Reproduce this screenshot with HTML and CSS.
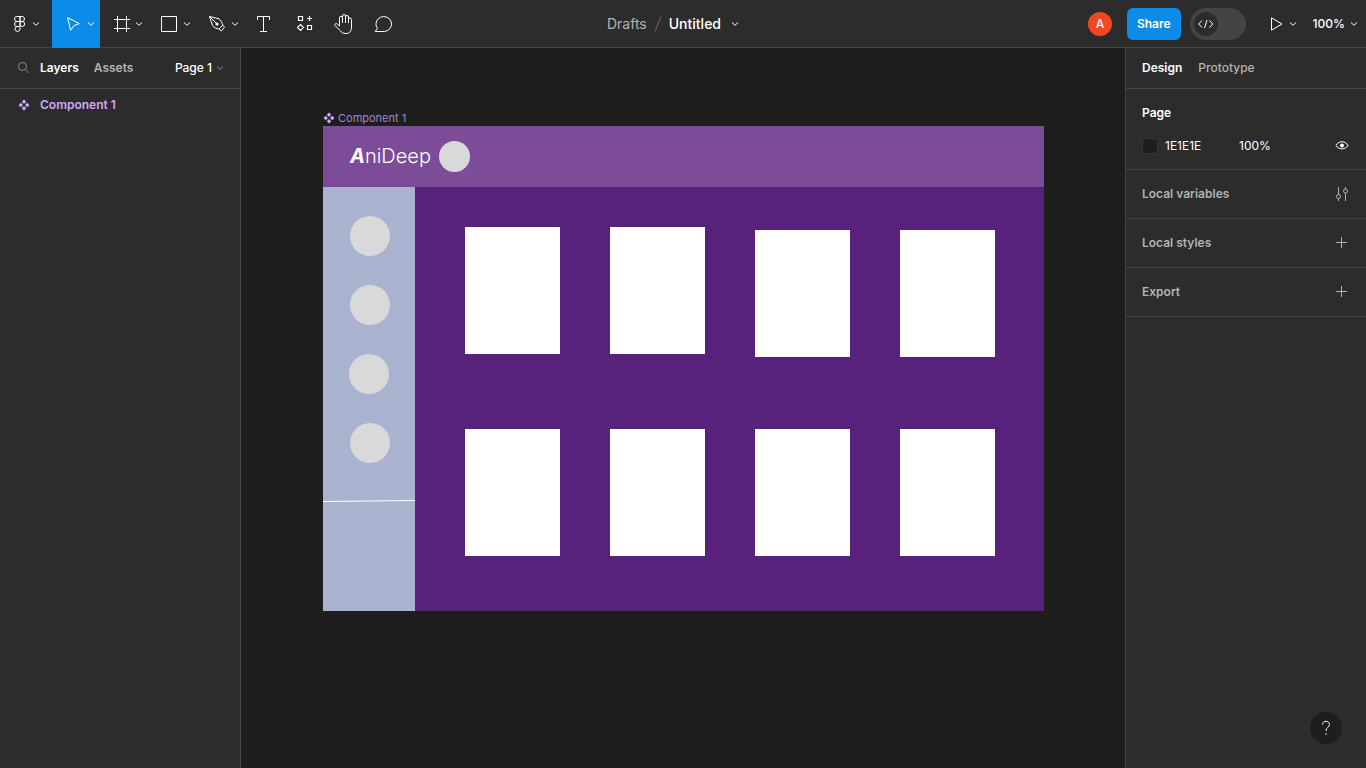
FILE: index.html
```html
<!DOCTYPE html>
<html lang="en">
<head>
<meta charset="utf-8">
<title>Untitled – Figma</title>
<link rel="stylesheet" href="styles.css">
</head>
<body>
<svg class="defs" aria-hidden="true">
  <symbol id="chevron" viewBox="0 0 8 8"><path d="M1 2.5 L4 5.3 L7 2.5" fill="none" stroke="currentColor"/></symbol>
  <symbol id="component" viewBox="0 0 12 12"><path d="M6 .5 8.2 2.8 6 5 3.8 2.8Z M6 7 8.2 9.2 6 11.5 3.8 9.2Z M2.8 3.8 5 6 2.8 8.2 .5 6Z M9.2 3.8 11.5 6 9.2 8.2 7 6Z" fill="currentColor"/></symbol>
  <symbol id="plus" viewBox="0 0 16 16"><path d="M2 7.5H13 M7.5 2V13" fill="none" stroke="currentColor"/></symbol>
</svg>
<div class="app">
  <header class="toolbar">
    <nav class="tools" aria-label="Tools">
      <button class="tool tool-menu" aria-label="Main menu">
        <svg class="icon" viewBox="0 0 24 24"><g fill="none" stroke="currentColor"><path d="M12 4.500H9A2.500 2.500 0 0 0 9 9.500H12Z M12 9.500H9A2.500 2.500 0 0 0 9 14.500H12Z M12 14.500H9A2.500 2.500 0 1 0 12 17Z M12 4.500H14A2.500 2.500 0 0 1 14 9.500H12Z"/><circle cx="14.300" cy="12" r="2.400"/></g></svg>
        <svg class="chevron"><use href="#chevron"/></svg>
      </button>
      <button class="tool tool-active" aria-label="Move">
        <svg class="icon" viewBox="0 0 24 24"><path d="M5.600 5.600 17.300 11.600 12 13.600 8.600 18.300Z" fill="none" stroke="currentColor" stroke-linejoin="round"/></svg>
        <svg class="chevron"><use href="#chevron"/></svg>
      </button>
      <button class="tool" aria-label="Frame">
        <svg class="icon" viewBox="0 0 24 24"><path d="M4 7.500H20 M4 16.500H20 M7.500 4V20 M16.500 4V20" fill="none" stroke="currentColor"/></svg>
        <svg class="chevron"><use href="#chevron"/></svg>
      </button>
      <button class="tool" aria-label="Rectangle">
        <svg class="icon" viewBox="0 0 24 24"><path d="M3.500 4.500H18.500V19.500H3.500Z" fill="none" stroke="currentColor"/></svg>
        <svg class="chevron"><use href="#chevron"/></svg>
      </button>
      <button class="tool" aria-label="Pen">
        <svg class="icon" viewBox="0 0 24 24"><g fill="none" stroke="currentColor" stroke-linejoin="round"><path d="M3.500 4.500 13 6.800C14.800 8 16 10.500 16.800 13.200L13 17C10 16.500 8 15.500 6.500 13.500Z M3.500 4.500 10.300 11.300"/><path d="M16.800 13.200 18.500 15.200 15.300 19 13 17"/></g><circle cx="11" cy="12" r="1.600" fill="currentColor"/></svg>
        <svg class="chevron"><use href="#chevron"/></svg>
      </button>
      <button class="tool tool-single" aria-label="Text">
        <svg class="icon" viewBox="0 0 24 24"><path d="M5.500 8V4.500H17.500V8 M11.500 4.500V19.500 M8 19.500H15" fill="none" stroke="currentColor"/></svg>
      </button>
      <button class="tool tool-single" aria-label="Resources">
        <svg class="icon" viewBox="0 0 24 24"><path d="M6.500 4.500H10.500V8.500H6.500Z M15.500 13.500H19.500V17.500H15.500Z M17.500 4V9 M15 6.500H20 M8.500 12.500 11.500 15.500 8.500 18.500 5.500 15.500Z" fill="none" stroke="currentColor" stroke-width="1.200"/></svg>
      </button>
      <button class="tool tool-single" aria-label="Hand">
        <svg class="icon" viewBox="0 0 24 24"><path d="M7.500 14V5.800A1.500 1.500 0 0 1 10.500 5.800V11 M10.500 6V4A1.500 1.500 0 0 1 13.500 4V11 M13.500 5A1.500 1.500 0 0 1 16.500 5V11 M16.500 7.500A1.500 1.500 0 0 1 19.500 7.500V15C19.500 19 17.500 21.500 14 21.500C11 21.500 9.500 20.500 8 18.500L3 13.500C2.200 12 4 10.800 5.400 12L7.500 14.200" fill="none" stroke="currentColor" stroke-linejoin="round"/></svg>
      </button>
      <button class="tool tool-single" aria-label="Comment">
        <svg class="icon" viewBox="0 0 24 24"><path d="M3.200 19.500 5.400 16.400A7.800 7.500 0 1 1 12.500 19.500Z" fill="none" stroke="currentColor" stroke-linejoin="round"/></svg>
      </button>
    </nav>
    <div class="title">
      <a class="folder" href="#">Drafts</a>
      <svg class="slash" viewBox="0 0 8 18"><path d="M1 16.500 7 1.500" stroke="currentColor" fill="none"/></svg>
      <button class="filename">Untitled <svg class="chevron"><use href="#chevron"/></svg></button>
    </div>
    <div class="actions">
      <button class="avatar" aria-label="Account">A</button>
      <button class="share">Share</button>
      <label class="devmode">
        <input class="devmode-input" type="checkbox" aria-label="Dev Mode">
        <svg class="devmode-knob" viewBox="0 0 24 24"><circle cx="12" cy="12" r="12" fill="#2c2c2c"/><path d="M8 8.500 4.700 12 8 15.500 M15.500 8.500 18.800 12 15.500 15.500 M13 8 10.500 16" fill="none" stroke="currentColor"/></svg>
      </label>
      <button class="present" aria-label="Present">
        <svg class="icon" viewBox="0 0 24 24"><path d="M7.500 5.800V18.200L18 12Z" fill="none" stroke="currentColor"/></svg>
        <svg class="chevron"><use href="#chevron"/></svg>
      </button>
      <button class="zoom">100% <svg class="chevron"><use href="#chevron"/></svg></button>
    </div>
  </header>
  <aside class="panel panel-left">
    <div class="tabs tabs-left">
      <button class="search" aria-label="Search"><svg viewBox="0 0 12 12"><g fill="none" stroke="currentColor"><circle cx="4.500" cy="4.500" r="4"/><path d="M7.500 7.500 11 11"/></g></svg></button>
      <button class="tab tab-active">Layers</button>
      <button class="tab">Assets</button>
      <button class="page-picker">Page 1 <svg class="chevron"><use href="#chevron"/></svg></button>
    </div>
    <ul class="layers">
      <li><button class="layer"><svg class="component-icon"><use href="#component"/></svg>Component 1</button></li>
    </ul>
  </aside>
  <main class="canvas">
    <div class="frame-label"><svg class="component-icon"><use href="#component"/></svg>Component 1</div>
    <div class="frame">
      <div class="shape banner"></div>
      <div class="shape rail"></div>
      <div class="shape logo"><b class="logo-a">A</b>niDeep</div>
      <div class="shape dot dot-banner"></div>
      <div class="shape dot dot-1"></div>
      <div class="shape dot dot-2"></div>
      <div class="shape dot dot-3"></div>
      <div class="shape dot dot-4"></div>
      <svg class="shape rule" viewBox="0 0 92 3"><path d="M0 2.500 92 1.500" stroke="#fff" fill="none"/></svg>
      <div class="shape card col-1 row-1"></div>
      <div class="shape card col-2 row-1"></div>
      <div class="shape card col-3 row-1-low"></div>
      <div class="shape card col-4 row-1-low"></div>
      <div class="shape card col-1 row-2"></div>
      <div class="shape card col-2 row-2"></div>
      <div class="shape card col-3 row-2"></div>
      <div class="shape card col-4 row-2"></div>
    </div>
  </main>
  <aside class="panel panel-right">
    <div class="tabs tabs-right">
      <button class="tab tab-active">Design</button>
      <button class="tab">Prototype</button>
    </div>
    <section class="section-page">
      <h2 class="heading heading-page">Page</h2>
      <div class="fill">
        <button class="swatch" aria-label="Page colour"></button>
        <input class="field field-hex" type="text" value="1E1E1E" aria-label="Colour">
        <input class="field field-opacity" type="text" value="100%" aria-label="Opacity">
        <button class="icon-button icon-bright" aria-label="Toggle visibility"><svg viewBox="0 0 16 16"><path d="M2 7.500C4.500 2.500 11.500 2.500 14 7.500C11.500 12 4.500 12 2 7.500Z" fill="none" stroke="currentColor"/><circle cx="8" cy="7.500" r="2" fill="currentColor"/></svg></button>
      </div>
    </section>
    <section class="section">
      <h2 class="heading">Local variables</h2>
      <button class="icon-button" aria-label="Open variables"><svg viewBox="0 0 16 16"><g fill="none" stroke="currentColor"><path d="M4.500 1V8.500 M4.500 12.500V15 M11.500 1V3 M11.500 7V15"/><circle cx="4.500" cy="10.500" r="2"/><circle cx="11.500" cy="5" r="2"/></g></svg></button>
    </section>
    <section class="section">
      <h2 class="heading">Local styles</h2>
      <button class="icon-button" aria-label="Add style"><svg><use href="#plus"/></svg></button>
    </section>
    <section class="section">
      <h2 class="heading">Export</h2>
      <button class="icon-button" aria-label="Add export"><svg><use href="#plus"/></svg></button>
    </section>
    <button class="help" aria-label="Help"><svg viewBox="0 0 16 16"><path d="M4.500 4.500C4.500 .3 11.500 .3 11.500 4.500C11.500 7.300 8 7 8 11" fill="none" stroke="currentColor"/><circle cx="8" cy="14" r=".8" fill="currentColor"/></svg></button>
  </aside>
</div>
</body>
</html>
```
FILE: styles.css
```css
* { box-sizing: border-box; }

body {
  margin: 0;
  background: #1e1e1e;
  color: #fff;
  font: 12px/16px Inter, "Liberation Sans", sans-serif;
}

button, input {
  margin: 0;
  padding: 0;
  border: 0;
  background: none;
  color: inherit;
  font: inherit;
}

svg { display: block; flex: none; }
.defs { position: absolute; width: 0; height: 0; }
.icon { width: 24px; height: 24px; }
.chevron { width: 8px; height: 8px; }

.app {
  display: grid;
  grid-template: 48px 1fr / 241px 1fr 241px;
  height: 100vh;
}

/* Toolbar */
.toolbar {
  grid-column: 1 / -1;
  display: grid;
  grid-template-columns: 1fr auto 1fr;
  background: #2c2c2c;
  box-shadow: inset 0 -1px #444;
}

.tools { display: flex; }

.tool {
  display: flex;
  align-items: center;
  gap: 1px;
  width: 48px;
  padding-left: 10px;
}
.tool-menu { width: 52px; padding-left: 8px; gap: 0; }
.tool-active { background: #0c8ce9; }
.tool-single { width: 40px; padding-left: 8px; }

.title {
  display: flex;
  align-items: center;
  gap: 7px;
  padding-right: 20px;
  font-size: 14px;
}
.folder { color: #b3b3b3; text-decoration: none; }
.slash { width: 8px; height: 18px; color: #6b6b6b; }
.filename { display: flex; align-items: center; gap: 10px; font-weight: 500; }

.actions {
  display: flex;
  align-items: center;
  justify-content: flex-end;
  padding-right: 8px;
}
.avatar {
  width: 24px;
  height: 24px;
  margin-right: 15px;
  border-radius: 50%;
  background: #f24822;
  font-weight: 500;
}
.share {
  height: 32px;
  margin-right: 9px;
  padding: 0 10px;
  border-radius: 6px;
  background: #0c8ce9;
  font-weight: 600;
}
.devmode {
  display: grid;
  align-items: center;
  margin-right: 18px;
}
.devmode-input {
  grid-area: 1 / 1;
  appearance: none;
  width: 56px;
  height: 32px;
  border-radius: 16px;
  background: #444;
}
.devmode-knob { grid-area: 1 / 1; width: 24px; height: 24px; margin-left: 4px; }
.present { display: flex; align-items: center; margin-right: 16px; }
.present .icon { margin-right: 1px; }
.zoom { display: flex; align-items: center; gap: 5px; font-weight: 500; }

/* Side panels */
.panel { background: #2c2c2c; }
.panel-left { border-right: 1px solid #444; }
.panel-right {
  display: flex;
  flex-direction: column;
  border-left: 1px solid #444;
}

.tabs {
  display: flex;
  align-items: center;
  gap: 16px;
  height: 41px;
  border-bottom: 1px solid #444;
}
.tabs-left { gap: 15px; padding: 0 16px 0 18px; }
.tabs-right { padding: 0 16px; }
.tab { color: #b3b3b3; font-weight: 500; }
.tabs-left .tab { font-weight: 600; }
.tabs .tab-active { color: #fff; font-weight: 600; }
.search { margin-right: -5px; color: #8c8c8c; }
.search svg { width: 12px; height: 12px; }
.page-picker {
  display: flex;
  align-items: center;
  gap: 4px;
  margin-left: auto;
  font-weight: 500;
}
.page-picker .chevron { color: #8c8c8c; }

.layers { margin: 0; padding: 0; list-style: none; }
.layer {
  display: flex;
  align-items: center;
  gap: 10px;
  width: 100%;
  height: 32px;
  padding-left: 18px;
  color: #d1a8ff;
  font-weight: 600;
}
.component-icon { width: 12px; height: 12px; }

.heading { margin: 0; color: #b3b3b3; font: inherit; font-weight: 600; }
.heading-page { color: #fff; }
.section-page { padding: 16px 16px 15px; border-bottom: 1px solid #444; }
.section {
  display: flex;
  align-items: center;
  justify-content: space-between;
  height: 49px;
  padding: 0 16px;
  border-bottom: 1px solid #444;
}
.icon-button { color: #b3b3b3; }
.icon-button svg { width: 16px; height: 16px; }
.icon-bright { margin-left: auto; color: #fff; }
.fill { display: flex; align-items: center; margin-top: 17px; }
.swatch {
  width: 16px;
  height: 16px;
  margin-right: 7px;
  border: 1px solid #333;
  background: #1e1e1e;
}
.field { height: 16px; }
.field-hex { width: 74px; }
.field-opacity { width: 48px; }

.help {
  display: grid;
  place-items: center;
  width: 32px;
  height: 32px;
  margin: auto 24px 24px auto;
  border-radius: 50%;
  background: #1e1e1e;
}
.help svg { width: 16px; height: 16px; }

/* Canvas */
.canvas { padding: 62px 0 0 82px; overflow: hidden; }
.frame-label {
  display: flex;
  align-items: center;
  gap: 3px;
  height: 16px;
  color: #a982cf;
  font-size: 11px;
}
.frame-label .component-icon { color: #d1a8ff; }
.frame {
  position: relative;
  width: 721px;
  height: 485px;
  background: #57217c;
}
.shape { position: absolute; }
.banner { inset: 0 0 auto; height: 61px; background: #7c4c99; }
.rail { inset: 61px auto 0 0; width: 92px; background: #a9b2ce; }
.logo { left: 27px; top: 18px; font-size: 20px; line-height: 24px; font-weight: 300; }
.logo-a { font-weight: 700; font-style: italic; }
.dot { width: 40px; height: 40px; border-radius: 50%; background: #d9d9d9; }
.dot-banner { left: 116px; top: 15px; width: 31px; height: 31px; }
.dot-1 { left: 27px; top: 90px; }
.dot-2 { left: 27px; top: 159px; }
.dot-3 { left: 26px; top: 228px; }
.dot-4 { left: 27px; top: 297px; }
.rule { left: 0; top: 373px; width: 92px; height: 3px; }
.card { width: 95px; height: 127px; background: #fff; }
.col-1 { left: 142px; }
.col-2 { left: 287px; }
.col-3 { left: 432px; }
.col-4 { left: 577px; }
.row-1 { top: 101px; }
.row-1-low { top: 104px; }
.row-2 { top: 303px; }
```
